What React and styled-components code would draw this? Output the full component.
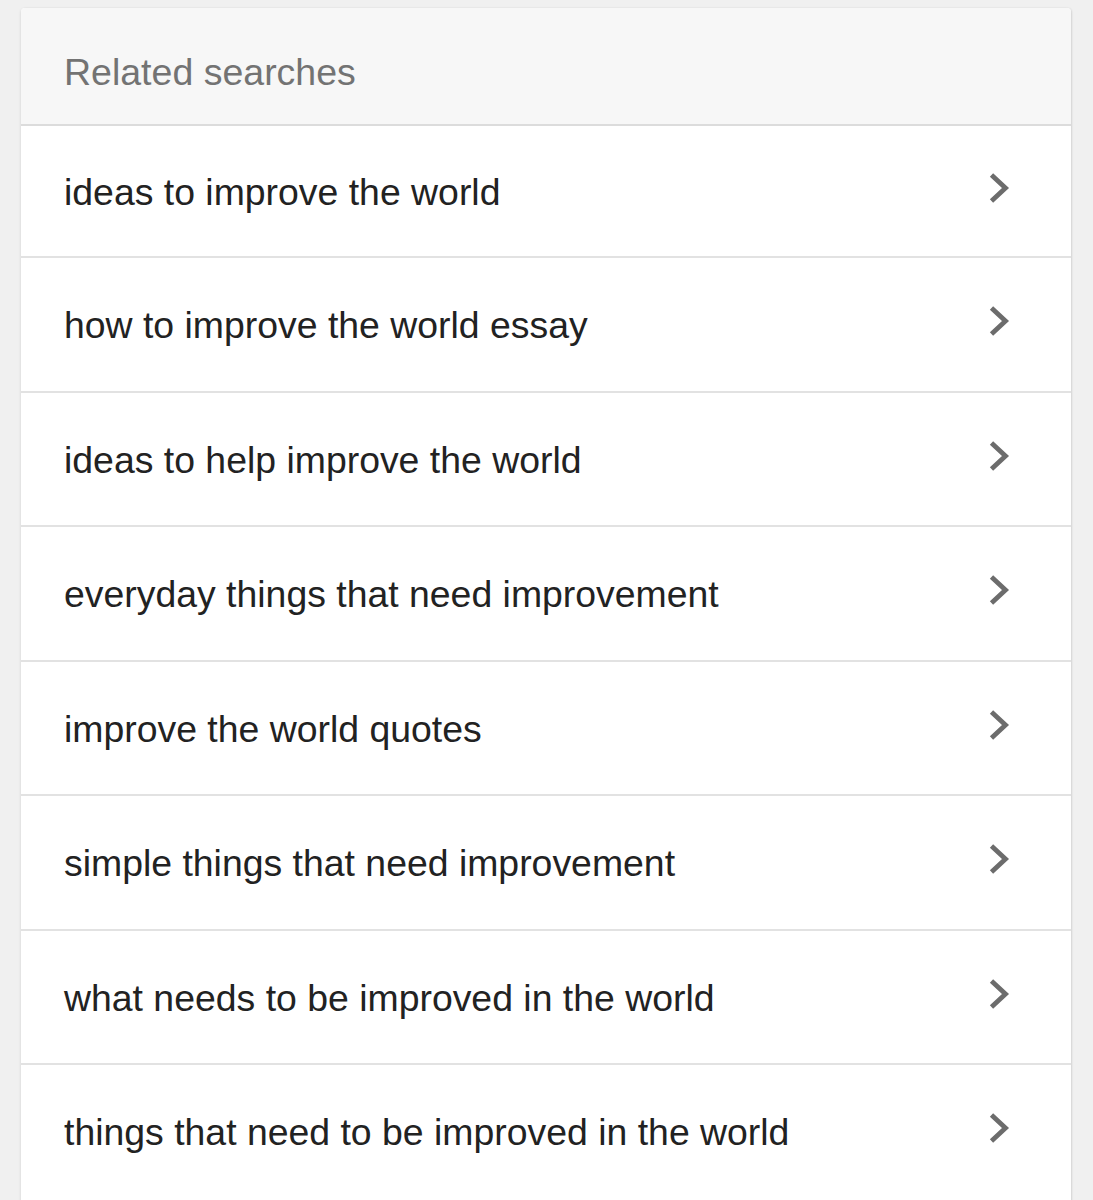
import React from "react";
import styled, { createGlobalStyle } from "styled-components";

const Global = createGlobalStyle`
  html, body {
    margin: 0;
    padding: 0;
    background: #f0f0f0;
    font-family: "Liberation Sans", Arial, Helvetica, sans-serif;
  }
`;

const Page = styled.div`
  padding: 8px 22px 0 21px;
  height: 1200px;
  overflow: hidden;
  box-sizing: border-box;
`;

const Card = styled.section`
  width: 1050px;
  background: #fff;
  border-radius: 4px 4px 0 0;
  box-shadow: 0 1px 3px rgba(0, 0, 0, 0.14), 1px 0 2px rgba(0, 0, 0, 0.06);
  padding-bottom: 20px;
`;

const Header = styled.header`
  height: 118px;
  box-sizing: border-box;
  padding: 43px 43px 0 43px;
  background: #f7f7f7;
  border-radius: 4px 4px 0 0;
  border-bottom: 2px solid #dcdcdc;
  font-size: 37.5px;
  line-height: 42px;
  color: #737373;
  white-space: nowrap;
`;

const List = styled.ul`
  list-style: none;
  margin: 0;
  padding: 0;
`;

const Row = styled.li`
  display: flex;
  align-items: center;
  justify-content: space-between;
  height: ${(p) => (p.$first ? "130px" : "134.5px")};
  box-sizing: border-box;
  padding: 0 61px 0 43px;
  border-top: ${(p) => (p.$first ? "none" : "2px solid #e2e2e2")};
  font-size: 37.4px;
  line-height: 42px;
  color: #222;
  white-space: nowrap;
`;

const Label = styled.span`
  padding-top: 2px;
`;

const Chevron = styled.svg`
  width: 22px;
  height: 32px;
  flex: none;
  margin-bottom: 6px;
`;

const items = [
  "ideas to improve the world",
  "how to improve the world essay",
  "ideas to help improve the world",
  "everyday things that need improvement",
  "improve the world quotes",
  "simple things that need improvement",
  "what needs to be improved in the world",
  "things that need to be improved in the world",
];

export default function App() {
  return (
    <>
      <Global />
      <Page>
        <Card>
          <Header>Related searches</Header>
          <List>
            {items.map((t, i) => (
              <Row key={t} $first={i === 0}>
                <Label>{t}</Label>
                <Chevron viewBox="0 0 22 32">
                  <polyline
                    points="3.5,3 17.5,16 3.5,29"
                    fill="none"
                    stroke="#6c6c6c"
                    strokeWidth="4.8"
                  />
                </Chevron>
              </Row>
            ))}
          </List>
        </Card>
      </Page>
    </>
  );
}
